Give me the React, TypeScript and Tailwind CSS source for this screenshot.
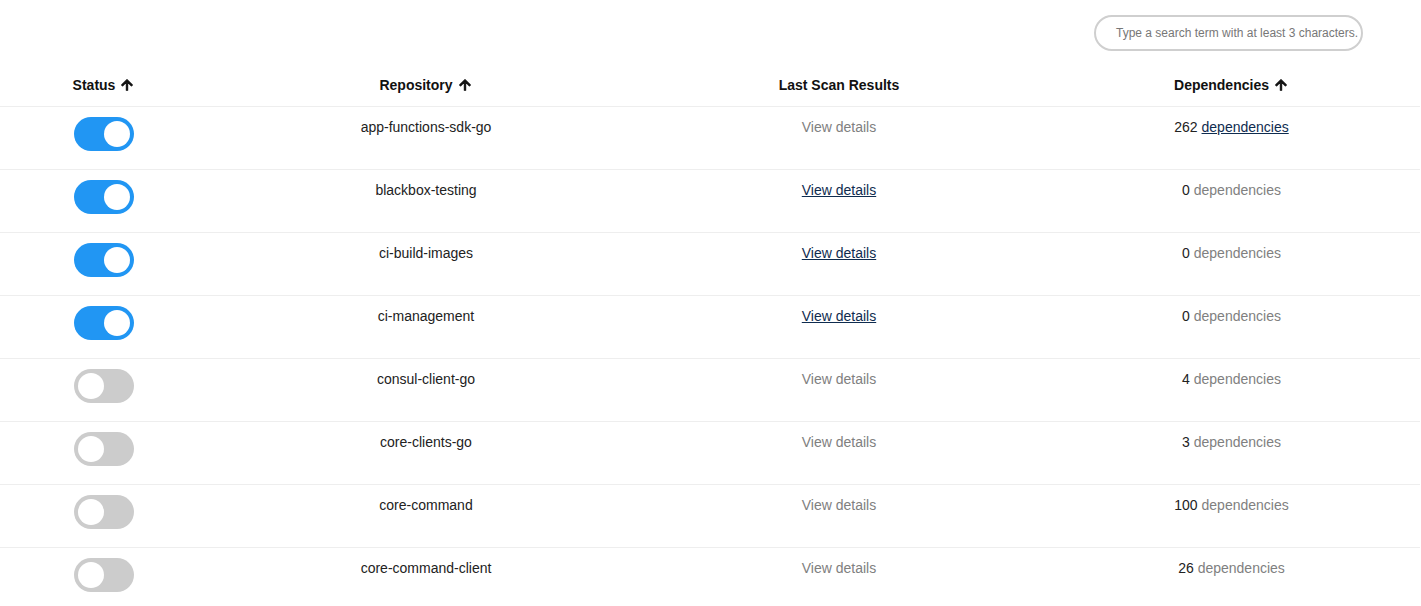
import React from "react";

type Row = {
  enabled: boolean;
  name: string;
  scanLink: boolean;
  deps: number;
  depsLink: boolean;
};

const rows: Row[] = [
  { enabled: true, name: "app-functions-sdk-go", scanLink: false, deps: 262, depsLink: true },
  { enabled: true, name: "blackbox-testing", scanLink: true, deps: 0, depsLink: false },
  { enabled: true, name: "ci-build-images", scanLink: true, deps: 0, depsLink: false },
  { enabled: true, name: "ci-management", scanLink: true, deps: 0, depsLink: false },
  { enabled: false, name: "consul-client-go", scanLink: false, deps: 4, depsLink: false },
  { enabled: false, name: "core-clients-go", scanLink: false, deps: 3, depsLink: false },
  { enabled: false, name: "core-command", scanLink: false, deps: 100, depsLink: false },
  { enabled: false, name: "core-command-client", scanLink: false, deps: 26, depsLink: false },
];

function SortArrow() {
  return (
    <svg width="16" height="16" viewBox="0 0 24 24" className="inline-block ml-[4px] -mt-[4px]">
      <path d="M4 12l1.41 1.41L11 7.83V20h2V7.83l5.58 5.59L20 12l-8-8-8 8z" fill="#111" stroke="#111" strokeWidth="1.6" strokeLinejoin="round" />
    </svg>
  );
}

function Toggle({ on }: { on: boolean }) {
  return (
    <div
      className={
        on
          ? "w-[60px] h-[34px] rounded-full bg-[#2196f3] flex items-center justify-end px-[4px]"
          : "w-[60px] h-[34px] rounded-full bg-[#cccccc] flex items-center justify-start px-[4px]"
      }
    >
      <div className="w-[26px] h-[26px] rounded-full bg-white" />
    </div>
  );
}

export default function App() {
  return (
    <div className="w-full bg-white text-[14px] text-[#222]" style={{ fontFamily: "'Liberation Sans', Arial, sans-serif" }}>
      <div className="flex justify-end pt-[15px] pr-[58px]">
        <div className="w-[269px] h-[36px] rounded-full border-2 border-[#cfcfcf] flex items-center pl-[20px]">
          <span className="text-[12px] text-[#777]">Type a search term with at least 3 characters.</span>
        </div>
      </div>

      <table className="w-[1420px] mt-[15px] border-collapse table-fixed">
        <colgroup>
          <col className="w-[208px]" />
          <col className="w-[436px]" />
          <col className="w-[390px]" />
          <col className="w-[386px]" />
        </colgroup>
        <thead>
          <tr className="h-[40px] border-b border-[#eeeeee]">
            <th className="text-[14px] font-bold text-[#111] align-middle">
              Status
              <SortArrow />
            </th>
            <th className="text-[14px] font-bold text-[#111] align-middle">
              Repository
              <SortArrow />
            </th>
            <th className="text-[14px] font-bold text-[#111] align-middle">Last Scan Results</th>
            <th className="text-[14px] font-bold text-[#111] align-middle pl-[9px]">
              Dependencies
              <SortArrow />
            </th>
          </tr>
        </thead>
        <tbody>
          {rows.map((r) => (
            <tr key={r.name} className="h-[63px] border-b border-[#eeeeee]">
              <td className="align-top pt-[10px]">
                <div className="flex justify-center">
                  <Toggle on={r.enabled} />
                </div>
              </td>
              <td className="align-top pt-[10px] text-center leading-[20px] text-[#222]">{r.name}</td>
              <td className="align-top pt-[10px] text-center leading-[20px]">
                {r.scanLink ? (
                  <a className="text-[#0f2c4f] underline cursor-pointer">View details</a>
                ) : (
                  <span className="text-[#808080]">View details</span>
                )}
              </td>
              <td className="align-top pt-[10px] pl-[9px] text-center leading-[20px]">
                <span className="text-[#222]">{r.deps} </span>
                {r.depsLink ? (
                  <a className="text-[#0f2c4f] underline cursor-pointer">dependencies</a>
                ) : (
                  <span className="text-[#808080]">dependencies</span>
                )}
              </td>
            </tr>
          ))}
        </tbody>
      </table>
    </div>
  );
}
